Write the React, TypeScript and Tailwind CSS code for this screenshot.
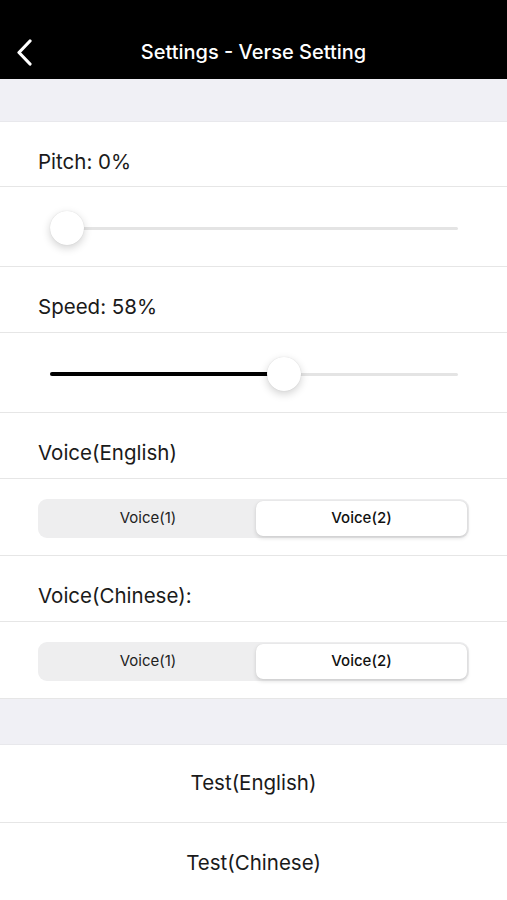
import React from "react";

const font = { fontFamily: 'Inter, "Noto Sans", "Liberation Sans", sans-serif' };

function Slider({ pct }: { pct: number }) {
  const left = 50;
  const width = 408;
  const thumb = 34;
  const cx = left + thumb / 2 + (pct / 100) * (width - thumb);
  return (
    <div className="h-[80px] border-b border-[#e6e6e6] bg-white flex items-center">
      <div className="relative w-full h-[34px] mt-[2px]">
        <div className="absolute left-[50px] w-[408px] top-[16px] h-[3px] rounded-full bg-[#e4e4e4]" />
        {pct > 0 && (
          <div
            className="absolute left-[50px] top-[15px] h-[4px] rounded-full bg-black"
            style={{ width: cx - left }}
          />
        )}
        <div
          className="absolute top-0 w-[34px] h-[34px] rounded-full bg-white shadow-[0_3px_8px_rgba(0,0,0,0.18),0_0_1px_rgba(0,0,0,0.15)]"
          style={{ left: cx - thumb / 2 }}
        />
      </div>
    </div>
  );
}

function Label({ text, h }: { text: string; h: string }) {
  return (
    <div className={`${h} border-b border-[#e6e6e6] bg-white flex items-center pl-[38px] pt-[16px]`}>
      <span className="text-[20.5px] text-[#1a1a1a]">{text}</span>
    </div>
  );
}

function Segmented() {
  return (
    <div className="h-[77px] border-b border-[#e6e6e6] bg-white flex items-center px-[38px] pt-[2px]">
      <div className="w-[431px] h-[39px] rounded-[9px] bg-[#eeeeef] flex p-[2px]">
        <div className="w-[216px] flex items-center justify-center text-[15px] text-[#222]">Voice(1)</div>
        <div className="flex-1 flex items-center justify-center text-[15px] font-medium text-[#111] bg-white rounded-[7px] shadow-[0_2px_4px_rgba(0,0,0,0.14),0_0_1px_rgba(0,0,0,0.1)]">
          Voice(2)
        </div>
      </div>
    </div>
  );
}

export default function App() {
  return (
    <div className="w-[507px] h-[900px] overflow-hidden bg-white" style={font}>
      <div className="h-[79px] bg-black relative flex items-end justify-center pb-[12px]">
        <svg className="absolute left-[15px] top-[39px]" width="20" height="27" viewBox="0 0 20 27">
          <path d="M15 2 L4 13.5 L15 25" fill="none" stroke="white" strokeWidth="3.2" strokeLinecap="round" strokeLinejoin="round" />
        </svg>
        <span className="text-white text-[20px] font-medium">Settings - Verse Setting</span>
      </div>
      <div className="h-[43px] bg-[#f0f0f5] border-b border-[#e8e8ec]" />
      <Label text="Pitch: 0%" h="h-[65px]" />
      <Slider pct={0} />
      <Label text="Speed: 58%" h="h-[66px]" />
      <Slider pct={58} />
      <Label text="Voice(English)" h="h-[66px]" />
      <Segmented />
      <Label text="Voice(Chinese):" h="h-[66px]" />
      <Segmented />
      <div className="h-[46px] bg-[#f0f0f5] border-b border-[#e8e8ec]" />
      <div className="h-[78px] border-b border-[#e6e6e6] flex items-center justify-center">
        <span className="text-[20.5px] text-[#1a1a1a]">Test(English)</span>
      </div>
      <div className="h-[80px] flex items-center justify-center">
        <span className="text-[20.5px] text-[#1a1a1a]">Test(Chinese)</span>
      </div>
    </div>
  );
}
